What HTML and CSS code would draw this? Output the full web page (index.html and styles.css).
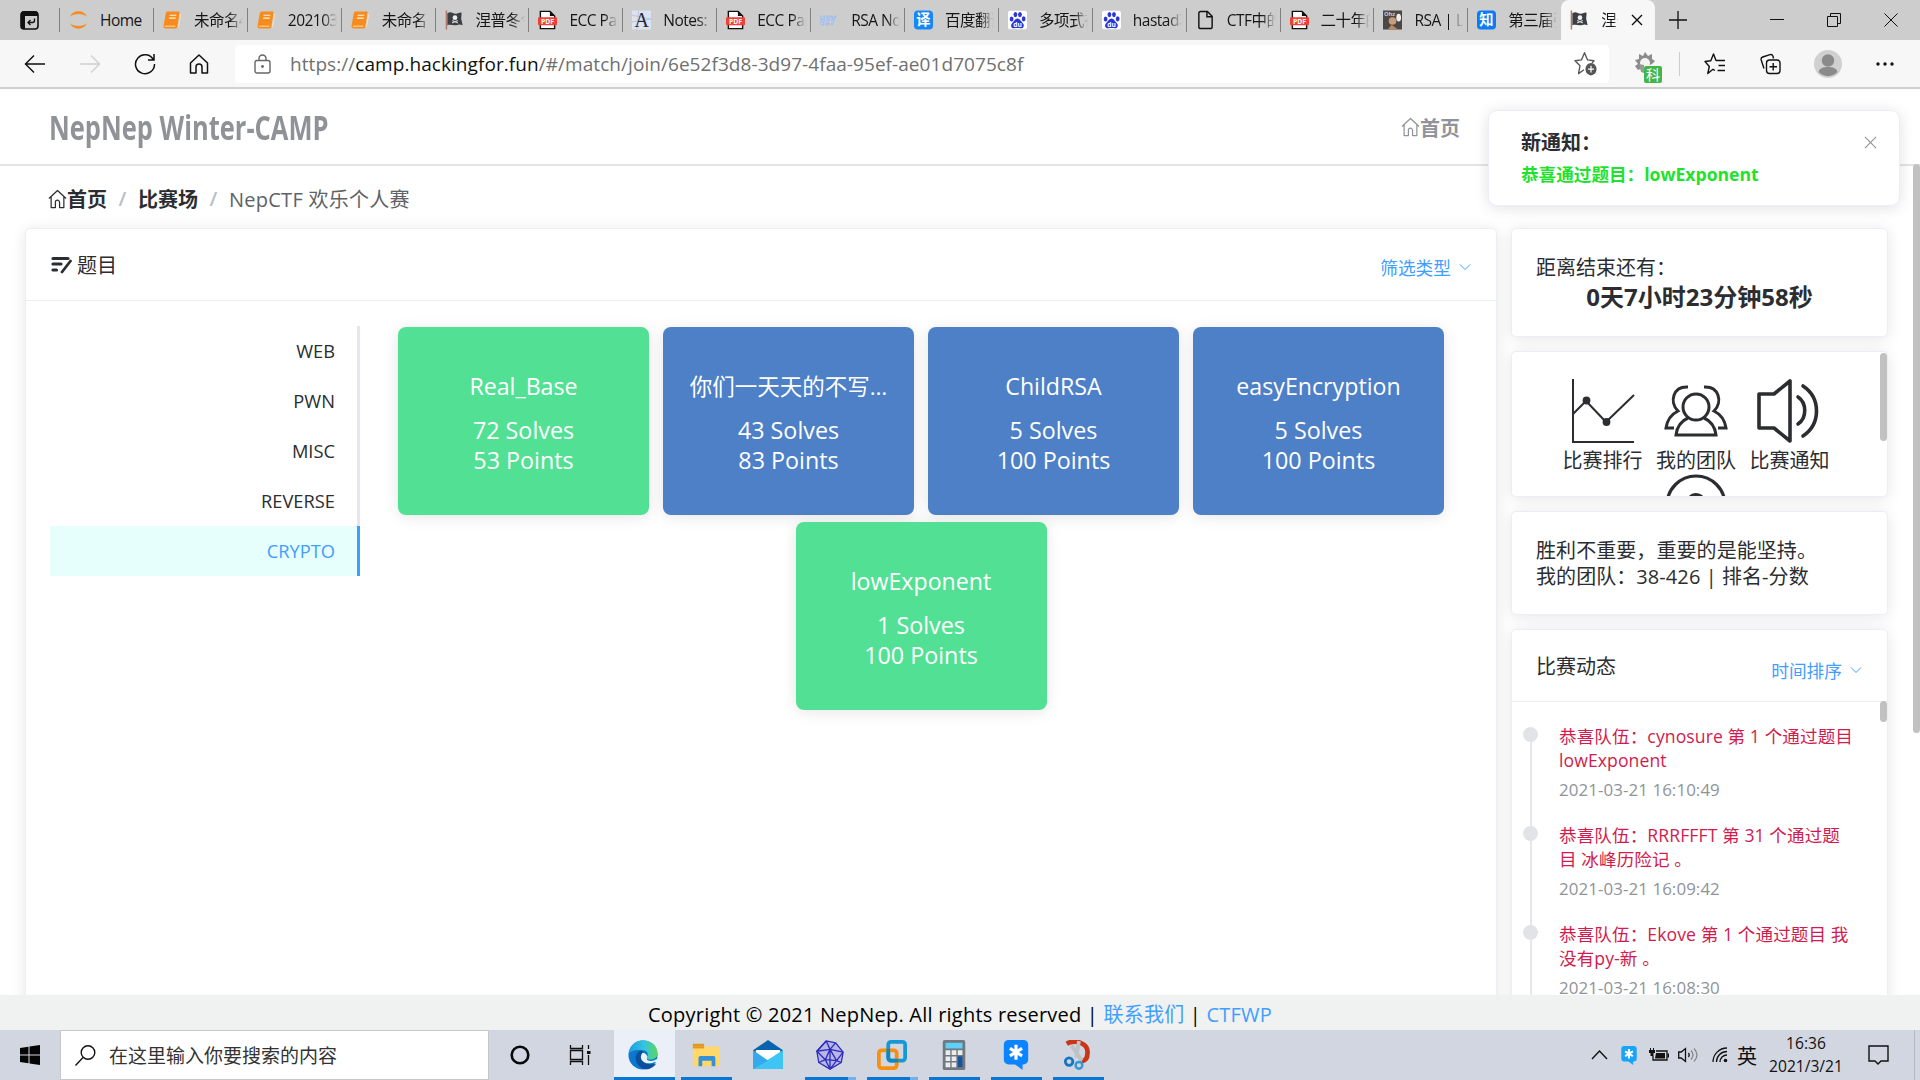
FILE: index.html
```html
<!DOCTYPE html>
<html lang="zh-CN">
<head>
<meta charset="utf-8">
<title>NepNep Winter-CAMP</title>
<link rel="stylesheet" href="styles.css">
</head>
<body>
<svg class="defs" aria-hidden="true">
  <symbol id="book" viewBox="0 0 20 20"><path d="M5 1h11.500a1 1 0 0 1 1 1.200L15 17.500a2 2 0 0 1-2 1.500H3a2.500 2.500 0 0 1-2.400-3L3 2.500A2 2 0 0 1 5 1z" fill="#f68b1f"/><path d="M7 5h7M6.400 8h7" stroke="#fff3df" stroke-width="1.300"/><path d="M2 16.500h11M17 4l1.500.5-2.300 13" stroke="#ffe1b4" stroke-width="1" fill="none"/></symbol>
  <symbol id="flag" viewBox="0 0 20 20"><path d="M1.500 0v20" stroke="#b17b6b" stroke-width="1.600"/><path d="M2.500 3c4-3 6 1 9 .5s4-2 6-1l-.5 6 1.500 7c-4-2-5 0-8 0s-5-1-8 0z" fill="#3b3f44"/><circle cx="10.500" cy="7.500" r="2.500" fill="#eee"/><path d="M7.500 13l6-2.500M7.500 10.500l6 2.500" stroke="#ccc" stroke-width="1.200"/></symbol>
  <symbol id="pdf" viewBox="0 0 20 20"><path d="M2.500.8h10l5 5v13.400h-15z" fill="#fff" stroke="#111" stroke-width="1.500"/><path d="M12.500.8v5h5z" fill="#111"/><rect x="0" y="7" width="20" height="8.500" rx="1" fill="#ef4136"/></symbol>
  <symbol id="paw" viewBox="0 0 20 20"><rect width="20" height="20" rx="3" fill="#fff"/><g fill="#2c35d8"><ellipse cx="3.800" cy="9" rx="2" ry="2.700"/><ellipse cx="7.800" cy="4.300" rx="2" ry="2.800"/><ellipse cx="12.600" cy="4.300" rx="2" ry="2.800"/><ellipse cx="16.500" cy="8.800" rx="2" ry="2.700"/><path d="M10 8.500c2.500 0 3.500 3 5.500 4.700 2.500 3 .5 5.800-2 5.600-2.500-.4-4.500-.4-7 0-3 .2-4.500-3-2-5.600C6.500 11.500 7.500 8.500 10 8.500z"/></g></symbol>
  <symbol id="house" viewBox="0 0 20 20"><path d="M1 9.500L10 1l9 8.500M3.300 8v11h4.500v-5.500a2.200 2.200 0 0 1 4.400 0V19h4.500V8" fill="none" stroke="currentColor" stroke-width="1.300" stroke-linejoin="round"/></symbol>
  <symbol id="down" viewBox="0 0 12 12"><path d="M1 3.500l5 5 5-5" fill="none" stroke="currentColor" stroke-width="1"/></symbol>
  <symbol id="starchat" viewBox="0 0 26 32"><path d="M5 0h16a5 5 0 0 1 5 5v16a5 5 0 0 1-5 5h-1v6l-8-6H5a5 5 0 0 1-5-5V5a5 5 0 0 1 5-5z" fill="currentColor"/><path d="M13 5v16M6.500 9l13 8M19.500 9l-13 8" stroke="#fff" stroke-width="3.400"/></symbol>
</svg>

<header class="tabs">
  <div class="tabmenu"><svg width="20" height="20" viewBox="0 0 20 20"><rect x="1" y="2" width="17" height="17" rx="3" fill="none" stroke="#111" stroke-width="1.600"/><path d="M1 6V4a3 3 0 0 1 3-3h11a3 3 0 0 1 3 3v2zM1 6h4v13H3a2 2 0 0 1-2-2z" fill="#111"/><path d="M14.500 8.500v2a2 2 0 0 1-2 2h-4M10.500 10l-2.500 2.500 2.500 2.500" fill="none" stroke="#111" stroke-width="1.400"/></svg></div>
  <div class="tab"><svg viewBox="0 0 20 20"><path d="M1 6.500C4-1 16-1 19 6.500 15 2.800 5 2.800 1 6.500zM1 13.500C4 21 16 21 19 13.500 15 17.200 5 17.200 1 13.500z" fill="#f68b1f"/></svg><span>Home</span></div>
  <div class="tab"><svg><use href="#book"/></svg><span>未命名4</span></div>
  <div class="tab"><svg><use href="#book"/></svg><span>202103</span></div>
  <div class="tab"><svg><use href="#book"/></svg><span>未命名</span></div>
  <div class="tab"><svg><use href="#flag"/></svg><span>涅普冬令</span></div>
  <div class="tab"><svg viewBox="0 0 20 20"><use href="#pdf"/><text x="10" y="13.900" font-size="7.200" text-anchor="middle" class="svgbold" fill="#fff">PDF</text></svg><span>ECC Pap</span></div>
  <div class="tab"><svg viewBox="0 0 20 20"><rect width="20" height="20" fill="#dde3ee"/><path d="M0 5l20 4M0 12l20-3M5 20l2-20" stroke="#b9c4d9"/><text x="10" y="17" font-size="21" text-anchor="middle" class="svgserif" fill="#22263a">A</text></svg><span>Notes:</span></div>
  <div class="tab"><svg viewBox="0 0 20 20"><use href="#pdf"/><text x="10" y="13.900" font-size="7.200" text-anchor="middle" class="svgbold" fill="#fff">PDF</text></svg><span>ECC Pap</span></div>
  <div class="tab"><svg viewBox="0 0 20 20"><text x="7" y="12" font-size="10" text-anchor="middle" class="svgbold slant" fill="#b9d2f7" stroke="#8fb5ee" stroke-width=".5" transform="scale(1 1.300)">HEY</text></svg><span>RSA No</span></div>
  <div class="tab"><svg viewBox="0 0 20 20"><rect width="20" height="20" rx="4" fill="#1687f5"/><text x="10" y="15.500" font-size="15" text-anchor="middle" class="svgbold" fill="#fff">译</text></svg><span>百度翻译</span></div>
  <div class="tab"><svg viewBox="0 0 20 20"><use href="#paw"/><text x="10" y="17" font-size="7" text-anchor="middle" class="svgbold" fill="#fff">du</text></svg><span>多项式在</span></div>
  <div class="tab"><svg viewBox="0 0 20 20"><use href="#paw"/><text x="10" y="17" font-size="7" text-anchor="middle" class="svgbold" fill="#fff">du</text></svg><span>hastad攻</span></div>
  <div class="tab"><svg viewBox="0 0 20 20"><path d="M3 3a2 2 0 0 1 2-2h7l5 5v11a2 2 0 0 1-2 2H5a2 2 0 0 1-2-2zM11.500 1v5.500H17" fill="none" stroke="#111" stroke-width="1.500"/></svg><span>CTF中的</span></div>
  <div class="tab"><svg viewBox="0 0 20 20"><use href="#pdf"/><text x="10" y="13.900" font-size="7.200" text-anchor="middle" class="svgbold" fill="#fff">PDF</text></svg><span>二十年的</span></div>
  <div class="tab"><svg viewBox="0 0 20 20"><rect width="20" height="20" fill="#4c4845"/><circle cx="10" cy="11" r="4" fill="#c99b76"/><ellipse cx="16.500" cy="7.500" rx="2.500" ry="4" fill="#eee"/><path d="M5 20l4-5 7 5z" fill="#b68a62"/><text x="1" y="5.500" font-size="6" class="svgbold" fill="#ccc">Ohz</text></svg><span>RSA | La</span></div>
  <div class="tab last"><svg viewBox="0 0 20 20"><rect width="20" height="20" rx="4" fill="#0a7cf5"/><text x="10" y="15.500" font-size="15" text-anchor="middle" class="svgbold" fill="#fff">知</text></svg><span>第三届强</span></div>
  <div class="tab active"><svg><use href="#flag"/></svg><span class="short">涅普</span><svg class="x" viewBox="0 0 12 12"><path d="M1 1l10 10M11 1L1 11" stroke="#111" stroke-width="1.400"/></svg></div>
  <svg class="plus" width="18" height="18" viewBox="0 0 18 18"><path d="M9 0v18M0 9h18" stroke="#111" stroke-width="1.300"/></svg>
  <div class="winctl">
    <svg width="14" height="14" viewBox="0 0 14 14"><path d="M0 6.500h14" stroke="#111"/></svg>
    <svg width="14" height="14" viewBox="0 0 14 14"><path d="M.5 3.500h10v10H.5zM3.500 3V.5h10v10H11" fill="none" stroke="#111"/></svg>
    <svg width="14" height="14" viewBox="0 0 14 14"><path d="M.5.5l13 13M13.500.5l-13 13" stroke="#111"/></svg>
  </div>
</header>

<nav class="toolbar">
  <div class="navbtns">
    <svg width="22" height="20" viewBox="0 0 22 20"><path d="M21 10H1.500M10 1.500L1.500 10l8.500 8.500" fill="none" stroke="#111" stroke-width="1.500"/></svg>
    <svg width="22" height="20" viewBox="0 0 22 20"><path d="M1 10h19.500M12 1.500l8.500 8.500-8.500 8.500" fill="none" stroke="#d0d0d0" stroke-width="1.500"/></svg>
    <svg width="22" height="22" viewBox="0 0 22 22"><path d="M19.500 7A9.500 9.500 0 1 0 20.500 11M20 1v6h-6" fill="none" stroke="#111" stroke-width="1.500"/></svg>
    <svg width="20" height="20" viewBox="0 0 20 20"><path d="M1.500 9L10 1l8.500 8v10h-5.500v-6a3 3 0 0 0-6 0v6H1.500z" fill="none" stroke="#111" stroke-width="1.500" stroke-linejoin="round"/></svg>
  </div>
  <div class="address">
    <svg width="17" height="20" viewBox="0 0 17 20"><rect x="1" y="6.500" width="15" height="12.500" rx="2" fill="none" stroke="#666" stroke-width="1.400"/><path d="M5 6.500V4.500a3.500 3.500 0 0 1 7 0v2" fill="none" stroke="#666" stroke-width="1.400"/><circle cx="8.500" cy="12.500" r="1.400" fill="#666"/></svg>
    <span class="url">https://<b>camp.hackingfor.fun</b>/#/match/join/6e52f3d8-3d97-4faa-95ef-ae01d7075c8f</span>
    <svg class="fav" width="23" height="25" viewBox="0 0 23 22" preserveAspectRatio="none"><path d="M10 16.500L4.500 20l1.500-7L1 8.500l6.500-.7L10.500 1.500l3 6.300 6.500.7-2 2" fill="none" stroke="#555" stroke-width="1.300" stroke-linejoin="round"/><circle cx="17" cy="16" r="5.500" fill="#555"/><path d="M17 13v6M14 16h6" stroke="#fff" stroke-width="1.200"/></svg>
  </div>
  <div class="exts">
    <svg class="gear" width="28" height="32" viewBox="0 0 28 32"><path d="M4 19L1 15l3-2-3-4 4-1V3l4 2 2-4 3 4 4-2v5l3 2-3 3" fill="#8b8b8b"/><circle cx="11" cy="12" r="5" fill="#f4f4f4"/><path d="M5 13l2 8 3 1v-8" fill="#9a9a9a"/><rect x="10" y="15" width="18" height="17" rx="2" fill="#43b649"/><text x="19" y="28.500" font-size="14" text-anchor="middle" class="svgcjk" fill="#fff">科</text></svg>
    <i class="vline"></i>
    <svg class="favs" width="22" height="22" viewBox="0 0 22 22"><path d="M11 17.500l-2-1.200L3.800 20.500l1.500-7L1 8.500l5.800-.8L9.500 1l2.500 6.500h9M14.500 12.500H21M13.500 17.500H21" fill="none" stroke="#111" stroke-width="1.400" stroke-linejoin="round"/></svg>
    <svg class="coll" width="21" height="22" viewBox="0 0 21 21"><path d="M4 15L1.200 6.500a2.500 2.500 0 0 1 1.500-3L10 1.200a2.500 2.500 0 0 1 3 1.500l.5 2.300" fill="none" stroke="#111" stroke-width="1.400"/><rect x="6.500" y="6.500" width="13.500" height="13.500" rx="3" fill="none" stroke="#111" stroke-width="1.400"/><path d="M13.200 9.500v7.500M9.500 13.200H17" stroke="#111" stroke-width="1.400"/></svg>
    <svg class="avatar" width="28" height="28" viewBox="0 0 28 28"><circle cx="14" cy="14" r="14" fill="#d0d0d0"/><circle cx="14" cy="10.500" r="6.200" fill="#8a8a8a"/><path d="M4.500 22c1-4 5-5 9.500-5s8.500 1 9.500 5a13 13 0 0 1-19 0z" fill="#8a8a8a"/></svg>
    <svg class="more" width="18" height="4" viewBox="0 0 18 4"><g fill="#111"><circle cx="2" cy="2" r="1.700"/><circle cx="9" cy="2" r="1.700"/><circle cx="16" cy="2" r="1.700"/></g></svg>
  </div>
</nav>

<div class="page">
  <header class="sitehead">
    <div class="logo">NepNep Winter-CAMP</div>
    <a class="homelink"><svg><use href="#house"/></svg>首页</a>
  </header>
  <div class="crumbs"><svg><use href="#house"/></svg><b>首页</b><i>/</i><b>比赛场</b><i>/</i><span>NepCTF 欢乐个人赛</span></div>
  <div class="content">
    <main class="card main">
      <div class="cardhead">
        <div class="title"><svg width="21" height="18" viewBox="0 0 21 18"><g stroke="#2b2d30" stroke-width="3.200" stroke-linecap="round"><path d="M2 2.500H17M2 8h8M2 14h3.500"/><path d="M19.500 5L11 16" stroke-width="2.800"/></g></svg>题目</div>
        <div class="drop">筛选类型<svg><use href="#down"/></svg></div>
      </div>
      <div class="mainbody">
        <ul class="menu"><li>WEB</li><li>PWN</li><li>MISC</li><li>REVERSE</li><li class="on">CRYPTO</li></ul>
        <div class="grid">
          <div class="chal done"><h3>Real_Base</h3><p>72 Solves<br>53 Points</p></div>
          <div class="chal"><h3 class="cjk">你们一天天的不写…</h3><p>43 Solves<br>83 Points</p></div>
          <div class="chal"><h3>ChildRSA</h3><p>5 Solves<br>100 Points</p></div>
          <div class="chal"><h3>easyEncryption</h3><p>5 Solves<br>100 Points</p></div>
          <div class="chal done"><h3>lowExponent</h3><p>1 Solves<br>100 Points</p></div>
        </div>
      </div>
    </main>
    <aside class="side">
      <section class="card timer"><div>距离结束还有：</div><strong>0天7小时23分钟58秒</strong></section>
      <section class="card tools">
        <div class="tool"><svg class="chart" viewBox="0 0 66 66"><g fill="none" stroke="#2b2d30" stroke-width="2"><path d="M3 0v63h61"/><path d="M3 35l13-13 20 21L64 16"/></g><g fill="#2b2d30"><circle cx="16.500" cy="21.500" r="3.900"/><circle cx="36.500" cy="43" r="3.900"/></g></svg><span>比赛排行</span></div>
        <div class="tool"><svg viewBox="0 0 66 66"><g fill="none" stroke="#2b2d30" stroke-width="3"><circle cx="33" cy="28" r="13"/><path d="M25 39c-7 3-11 9-12 17h40c-1-8-5-14-12-17"/><path d="M25 8C10 7 6 23 15 32 7 36 4 42 3 49h8M41 8c15-1 19 15 10 24 8 4 11 10 12 17h-8"/></g></svg><span>我的团队</span></div>
        <div class="tool"><svg viewBox="0 0 66 66"><g fill="none" stroke="#2b2d30" stroke-width="3.600" stroke-linejoin="round"><path d="M2 15h15L33 2v60L17 49H2z"/><path d="M41 18c9 6 9 21 0 27M46 7c18 12 18 38 0 50" stroke-linecap="round"/></g></svg><span>比赛通知</span></div>
        <div class="tool"><svg viewBox="0 0 66 66"><g fill="none" stroke="#2b2d30" stroke-width="3.200"><circle cx="33" cy="27" r="29"/><path d="M25 24a8 8 0 1 1 11 8q-3 2-3 7"/></g></svg></div>
        <i class="thumb"></i>
      </section>
      <section class="card motto">胜利不重要，重要的是能坚持。<br>我的团队：38-426 | 排名-分数</section>
      <section class="card feed">
        <div class="cardhead"><div class="title">比赛动态</div><div class="drop">时间排序<svg><use href="#down"/></svg></div></div>
        <ul class="timeline">
          <li>恭喜队伍：cynosure 第 1 个通过题目<br>lowExponent<time>2021-03-21 16:10:49</time></li>
          <li>恭喜队伍：RRRFFFT 第 31 个通过题<br>目 冰峰历险记 。<time>2021-03-21 16:09:42</time></li>
          <li>恭喜队伍：Ekove 第 1 个通过题目 我<br>没有py-新 。<time>2021-03-21 16:08:30</time></li>
        </ul>
        <i class="thumb"></i>
      </section>
    </aside>
  </div>
  <i class="pagethumb"></i>
  <div class="notice"><h4>新通知：</h4><p>恭喜通过题目：lowExponent</p><svg viewBox="0 0 14 14"><path d="M1 1l12 12M13 1L1 13" stroke="#909399" stroke-width="1.200"/></svg></div>
</div>

<footer class="foot"><span>Copyright © 2021 NepNep. All rights reserved | <a>联系我们</a> | <a>CTFWP</a></span></footer>

<div class="taskbar">
  <div class="start"><svg width="20" height="20" viewBox="0 0 20 20"><path d="M0 3l8.500-1.300V9.500H0zM9.500 1.500L20 0v9.500H9.500zM0 10.500h8.500v7.800L0 17zM9.500 10.500H20V20L9.500 18.500z" fill="#050505"/></svg></div>
  <div class="search"><svg width="21" height="21" viewBox="0 0 21 21"><circle cx="13" cy="7.500" r="6.800" fill="none" stroke="#111" stroke-width="1.400"/><path d="M8 12.500L.5 20.500" stroke="#111" stroke-width="1.400"/></svg><span>在这里输入你要搜索的内容</span></div>
  <div class="sys"><svg width="20" height="20" viewBox="0 0 20 20"><circle cx="10" cy="10" r="8.300" fill="none" stroke="#08090c" stroke-width="2.600"/></svg></div>
  <div class="sys"><svg width="22" height="20" viewBox="0 0 22 20"><path d="M1.500 0v3.500h12V0M1.500 5.500h12v9h-12zM1.500 20v-3.500h12V20M19.500 0v4M19.500 10v10" fill="none" stroke="#111" stroke-width="1.300"/><path d="M18 6h3.500v3H18z" fill="#111"/></svg></div>
  <div class="apps">
    <div class="app cur"><svg viewBox="0 0 32 32"><defs><linearGradient id="ea" x1="0" x2="1"><stop stop-color="#169fe3"/><stop offset=".55" stop-color="#35c6dd"/><stop offset="1" stop-color="#5bd65c"/></linearGradient></defs><circle cx="16" cy="16" r="15.500" fill="#0b78cf"/><path d="M.7 15C3-6 32-3 31.500 15c0 6-10 8-12 4 3-3 2-8-4-8C8 10 2 12 .7 15z" fill="url(#ea)"/><path d="M12 12c-7 5-4 17 7 19.300 5 0 9-3 11-6.300-8 3-16-2-15-8 .3-2 1-3 2-4-2-2-4-2-5-1z" fill="#0c4e9e"/><path d="M15.500 13.500c-5 6 1 13 10 11l5-1.500c1.500-2.500 0-3-2-1.500-4 1.500-8 1-8.500-1.500 1-2 .5-6-4.500-6.500z" fill="#eaf3fb"/></svg></div>
    <div class="app run"><svg viewBox="0 0 32 32"><path d="M2 4h12v5H2z" fill="#e5961e"/><path d="M2 7h28v21H2z" fill="#ffd869"/><path d="M2 7h12v2H2z" fill="#e5961e"/><path d="M8 28V19a2 2 0 0 1 2-2h14a2 2 0 0 1 2 2v9h-4v-6H12v6z" fill="#3490d8"/></svg></div>
    <div class="app"><svg viewBox="0 0 32 32"><path d="M0 11L16 0l16 11v4H0z" fill="#0963ac"/><path d="M3 11h26v4L16 25 3 15z" fill="#fff"/><path d="M0 11l16 11 16-11v20H0z" fill="#35a9ee"/><path d="M3 11h26L16 20z" fill="#fff"/><path d="M32 11v20H0z" fill="#3fc5f5"/><path d="M3 11h26l-12 9z" fill="#fff"/><path d="M0 11l16 11L0 31z" fill="#35a9ee"/></svg></div>
    <div class="app run multi"><svg viewBox="0 0 32 32"><g fill="#b8b6e6" stroke="#2d2cbd" stroke-width="1.400" stroke-linejoin="round"><path d="M12 1l10 2 8 10-2 11-12 7-12-7-2-12z"/><path d="M12 1l4 9 14 3M22 3l-6 7L2 12l9 9 5-11 7 12 7-9M4 24l7-3 12 1 5 2M11 21l5 10 7-9M12 1L2 12M16 10v21" fill="none"/></g></svg></div>
    <div class="app run multi"><svg viewBox="0 0 32 32"><rect x="12" y="2" width="18" height="20" rx="3" fill="none" stroke="#1599d6" stroke-width="4"/><rect x="2" y="11" width="19" height="19" rx="3" fill="none" stroke="#f7900f" stroke-width="4"/><path d="M12 9v10a3 3 0 0 0 3 3h8" fill="none" stroke="#1286bd" stroke-width="4"/></svg></div>
    <div class="app run"><svg viewBox="0 0 32 32"><rect x="4" y="0" width="24" height="32" rx="2" fill="#72797e"/><rect x="7" y="3" width="18" height="6" fill="#5ed0fa"/><g fill="#e9edf0"><path d="M7 11h5v5H7zM13.500 11h5v5h-5zM20 11h5v5h-5zM7 17.500h5v5H7zM13.500 17.500h5v5h-5zM7 24h5v5H7zM13.500 24h5v5h-5z"/></g><path d="M20 17.500h5V29h-5z" fill="#15549d"/></svg></div>
    <div class="app run blue"><svg><use href="#starchat"/></svg></div>
    <div class="app run"><svg viewBox="0 0 32 32"><path d="M4 4C12-1 28 3 26 15c0 4-2 7-6 8" fill="none" stroke="#c93616" stroke-width="5"/><path d="M17 1l-3 18M9 6l11 16" stroke="#bcc2c6" stroke-width="4"/><circle cx="6.500" cy="23" r="4" fill="#d1d6e1" stroke="#1875bf" stroke-width="3"/><circle cx="17" cy="27" r="3.600" fill="#d1d6e1" stroke="#3697d3" stroke-width="2.600"/></svg></div>
  </div>
  <div class="tray">
    <svg width="17" height="10" viewBox="0 0 17 10"><path d="M1 9l7.500-8L16 9" fill="none" stroke="#111" stroke-width="1.400"/></svg>
    <svg class="t2" width="16" height="19"><use href="#starchat"/></svg>
    <svg class="t3" width="20" height="14" viewBox="0 0 20 14"><path d="M7 3h11v9H4V8" fill="none" stroke="#111" stroke-width="1.300"/><path d="M7 5h9v5.500H6zM18.500 5.500H20v4h-1.500zM0 2h6v3H4.500v3h-3V5H0z" fill="#111"/><path d="M1.500 0v2M4.500 0v2" stroke="#111"/></svg>
    <svg class="t4" width="21" height="16" viewBox="0 0 21 16"><path d="M.7 5h2.500L7.500 1.500v13L3.200 11H.7z" fill="none" stroke="#111" stroke-width="1.300"/><path d="M10.500 6q1.500 2 0 4" fill="none" stroke="#111" stroke-width="1.300"/><path d="M13 3.500q4 4.500 0 9M16 1.500q6 6.500 0 13" fill="none" stroke="#888" stroke-width="1.300"/></svg>
    <svg class="t5" width="16" height="16" viewBox="0 0 16 16"><path d="M1 15A14 14 0 0 1 15 1M4.500 15A10.500 10.500 0 0 1 15 4.500M8 15a7 7 0 0 1 7-7" fill="none" stroke="#111" stroke-width="1.300"/><circle cx="13.500" cy="13.500" r="1.800" fill="#111"/></svg>
    <span class="ime">英</span>
    <div class="clock">16:36<br>2021/3/21</div>
    <svg class="t6" width="21" height="20" viewBox="0 0 21 20"><path d="M1 1h19v15h-7l-3 3-3-3H1z" fill="none" stroke="#111" stroke-width="1.400"/></svg>
    <i class="peek"></i>
  </div>
</div>
</body>
</html>
```
FILE: styles.css
```css
* { box-sizing: border-box; }
body { margin: 0; width: 1920px; height: 1080px; overflow: hidden; display: flex; flex-direction: column; background: #fff; color: #2b2d30; font-family: "Open Sans", "Noto Sans CJK SC", sans-serif; font-size: 20px; }
ul, h3, h4, p { margin: 0; padding: 0; list-style: none; font-weight: 400; }
svg { display: block; flex: none; }
i { font-style: normal; }
.defs { position: absolute; width: 0; height: 0; }
.svgbold { font-family: "Open Sans", "Noto Sans CJK SC", sans-serif; font-weight: 700; letter-spacing: 0; }
.svgcjk { font-family: "Noto Sans CJK SC", sans-serif; }
.svgserif { font-family: "Liberation Serif", serif; }
.slant { font-style: italic; }

.tabs { height: 40px; flex: none; display: flex; align-items: center; background: #cdcdcd; color: #161616; }
.tabmenu { width: 59px; flex: none; padding-left: 20px; }
.tab { width: 93.900px; height: 24px; flex: none; display: flex; align-items: center; border-left: 1px solid #808080; padding-left: 9px; gap: 12px; font-size: 15.500px; line-height: 24px; letter-spacing: -.5px; }
.tab svg { width: 19px; height: 20px; }
.tab span { width: 50px; overflow: hidden; white-space: nowrap; -webkit-mask-image: linear-gradient(90deg, #000 70%, transparent 98%); mask-image: linear-gradient(90deg, #000 70%, transparent 98%); }
.tab:nth-child(2) span { -webkit-mask-image: none; mask-image: none; }
.tab.active { height: 40px; background: #f7f7f7; border: 0; border-radius: 8px 8px 0 0; padding-left: 9px; }
.tab.active .short { width: 18px; }
.tab.active .x { width: 12px; height: 12px; }
.plus { margin-left: 14px; }
.winctl { display: flex; gap: 43px; margin-left: 83px; }

.toolbar { height: 49px; flex: none; display: flex; align-items: center; background: #f7f7f7; border-bottom: 2px solid #cfcfcf; }
.navbtns { display: flex; align-items: center; gap: 33px; width: 235px; padding-left: 24px; }
.address { width: 1374px; height: 38px; background: #fff; border-radius: 4px; display: flex; align-items: center; padding: 0 12px 0 19px; }
.url { margin-left: 19px; font-size: 19px; color: #707070; letter-spacing: .06px; white-space: nowrap; }
.url b { font-weight: 400; color: #111; }
.fav { margin-left: auto; }
.exts { display: flex; align-items: center; padding-left: 25px; }
.gear { margin-top: 6px; }
.vline { width: 1px; height: 24px; background: #ccc; margin-left: 17px; }
.favs { margin-left: 24px; }
.coll { margin-left: 34px; }
.avatar { margin-left: 33px; }
.more { margin-left: 34px; }

.page { position: relative; height: 906px; flex: none; overflow: hidden; }
.sitehead { height: 77px; border-bottom: 2px solid #e4e4e4; display: flex; justify-content: space-between; align-items: center; padding: 1px 460px 0 49px; }
.logo { font-size: 34px; line-height: 40px; font-weight: 700; color: #8f9398; white-space: nowrap; width: 278px; transform: scaleX(.75); transform-origin: 0 50%; }
.homelink { display: flex; align-items: center; font-weight: 700; color: #909399; }
.homelink svg { width: 19px; height: 20px; }
.crumbs { height: 62px; display: flex; align-items: center; padding: 3px 0 0 48px; color: #606266; white-space: nowrap; }
.crumbs svg { width: 19px; height: 20px; color: #2b2d30; }
.crumbs b { color: #2b2d30; }
.crumbs i { width: 31px; text-align: center; color: #b9bdc5; font-weight: 600; }
.crumbs span { letter-spacing: .25px; }
.content { display: flex; gap: 14px; padding-left: 25px; height: 767px; }
.card { background: #fff; border: 1px solid #ebeef5; border-radius: 5px; box-shadow: 0 2px 15px rgba(0, 0, 0, .1); }
.main { width: 1472px; height: 790px; }
.cardhead { height: 72px; border-bottom: 1px solid #ebeef5; display: flex; justify-content: space-between; align-items: center; padding: 0 25px 0 25px; }
.title { display: flex; align-items: center; gap: 5px; }
.drop { display: flex; align-items: center; gap: 8px; font-size: 17.700px; color: #409eff; padding-top: 4px; }
.drop svg { width: 12px; height: 12px; }
.mainbody { display: flex; padding: 25px 0 0 24px; }
.menu { width: 310px; height: 250px; border-right: 3px solid #e4e7ed; font-size: 18.300px; flex: none; }
.menu li { height: 50px; line-height: 50px; text-align: right; padding-right: 22px; }
.menu .on { color: #409eff; background: #e6fffd; margin-right: -3px; border-right: 3px solid #409eff; }
.grid { width: 1070px; margin: 1px 0 0 26px; display: flex; flex-wrap: wrap; justify-content: center; align-content: flex-start; gap: 7px 14px; }
.chal { width: 251px; height: 188px; border-radius: 8px; background: #4d80c7; color: #fff; text-align: center; font-size: 23.300px; line-height: 30px; padding-top: 44px; box-shadow: 0 2px 15px rgba(0, 0, 0, .1); white-space: nowrap; }
.chal.done { background: #52e194; }
.chal h3 { font-size: 23.200px; height: 30px; margin-bottom: 14px; }
.chal .cjk { font-size: 22.500px; padding-top: 1px; }

.side { width: 377px; display: flex; flex-direction: column; gap: 14px; }
.side .card { flex: none; }
.timer { height: 109px; padding: 24px; line-height: 29px; }
.timer strong { display: block; text-align: center; font-size: 24px; }
.tools { height: 146px; position: relative; overflow: hidden; display: flex; flex-wrap: wrap; justify-content: center; align-content: flex-start; gap: 0 13.500px; padding: 26px 45px 0 38px; }
.tool { width: 80px; height: 99px; line-height: 30px; white-space: nowrap; }
.tool svg { width: 66px; height: 68px; margin: 0 auto; overflow: visible; }
.tools .thumb { position: absolute; right: 0; top: 1px; width: 7px; height: 88px; border-radius: 4px; background: #c1c1c1; }
.motto { height: 104px; padding: 26px 24px; line-height: 26px; white-space: nowrap; letter-spacing: .07px; }
.feed { height: 400px; position: relative; }
.feed .cardhead { padding-left: 24px; }
.feed .drop { padding-top: 8px; }
.timeline { padding: 22px 0 0 11px; font-size: 17.600px; line-height: 24px; color: #d01c4e; }
.timeline li { position: relative; height: 99px; padding-left: 36px; white-space: nowrap; letter-spacing: .08px; }
.timeline li::before { content: ""; position: absolute; left: 7px; top: 8px; width: 2px; height: 99px; background: #e4e7ed; }
.timeline li::after { content: ""; position: absolute; left: 0; top: 3px; width: 15px; height: 15px; border-radius: 50%; background: #e2e3e6; }
.timeline time { display: block; color: #909399; font-size: 16.900px; margin-top: 6px; line-height: 24px; }
.feed .thumb { position: absolute; right: 0; top: 71px; width: 7px; height: 21px; border-radius: 4px; background: #c1c1c1; }
.pagethumb { position: absolute; right: 0; top: 75px; width: 7px; height: 569px; border-radius: 4px; background: #c1c1c1; }
.notice { position: absolute; left: 1488px; top: 21px; width: 412px; height: 96px; background: #fff; border: 1px solid #ebeef5; border-radius: 9px; box-shadow: 0 2px 15px rgba(0, 0, 0, .12); padding: 16px 32px; }
.notice h4 { font-size: 20px; line-height: 31px; font-weight: 700; }
.notice p { font-size: 17.600px; line-height: 33px; font-weight: 700; color: #1fe22d; }
.notice svg { position: absolute; right: 22px; top: 25px; width: 13px; height: 13px; }

.foot { height: 35px; flex: none; background: #f0f1f1; color: #000; display: flex; align-items: center; justify-content: center; white-space: nowrap; line-height: 35px; padding-top: 4px; letter-spacing: .22px; }
.foot a { color: #409eff; }
.taskbar { height: 50px; flex: none; background: #d1d6e1; display: flex; }
.start { width: 60px; display: grid; place-items: center; }
.search { width: 429px; background: #fff; border: 1px solid #c8c8c8; display: flex; align-items: center; gap: 13px; padding-left: 14px; font-size: 19px; color: #333; }
.sys { width: 61px; display: grid; place-items: center; }
.sys + .sys { width: 60px; }
.apps { display: flex; margin-left: 4px; gap: 11px; }
.app { width: 51px; height: 50px; padding: 10px 10px 0; position: relative; }
.app svg { width: 30px; height: 30px; }
.app.run { border-bottom: 3px solid #0b76d1; }
.app.cur { width: 61px; margin-right: -5px; padding-left: 14px; background: #eaeff8; border-bottom: 3px solid #0b76d1; }
.app.multi { border-image: linear-gradient(90deg, #0b76d1 80%, #70b1ee 80%) 3; }
.blue { color: #0a84ff; }
.tray { margin-left: auto; display: flex; align-items: center; }
.t2 { margin-left: 13px; color: #17a5fb; }
.t3 { margin-left: 12px; }
.t4 { margin-left: 9px; }
.t5 { margin-left: 13px; }
.ime { margin-left: 9px; color: #111; font-size: 20px; }
.clock { width: 76px; margin-left: 11px; text-align: center; font-size: 15.600px; line-height: 23px; color: #111; white-space: nowrap; }
.t6 { margin-left: 24px; }
.peek { width: 1px; height: 50px; background: #b4b9c4; margin: 0 5px 0 25px; }
```
